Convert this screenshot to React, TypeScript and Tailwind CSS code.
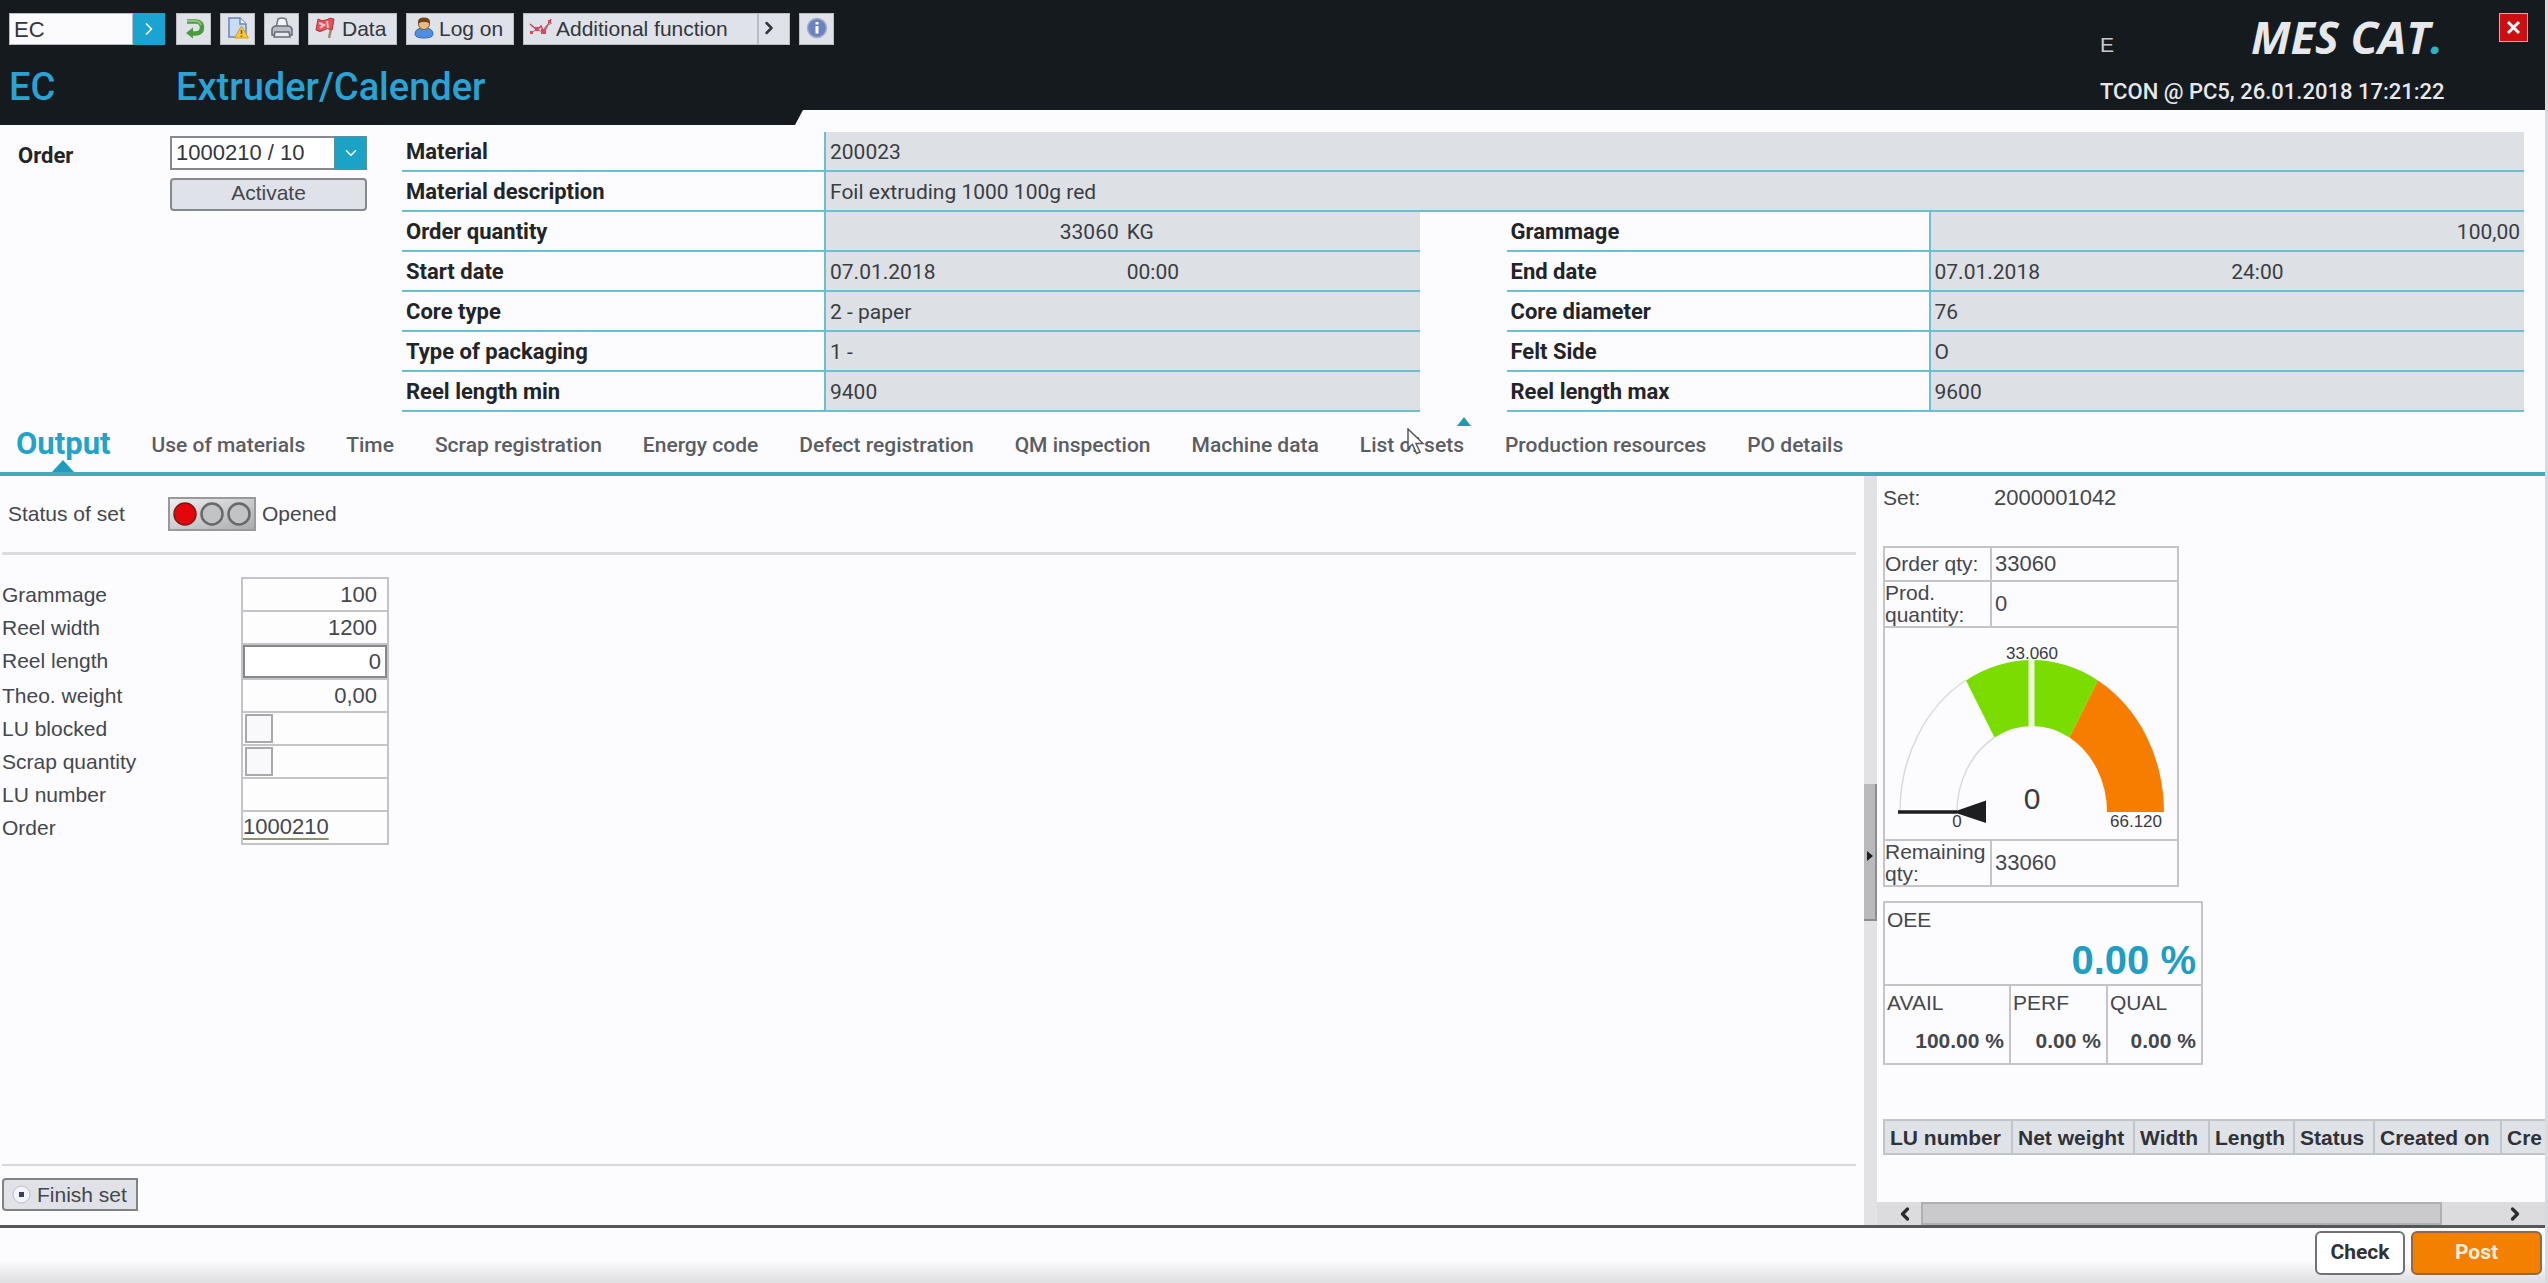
import { ReactNode } from "react";
import { ChevronDown, ChevronRight, ChevronLeft } from "lucide-react";

const TABS = [
  "Output",
  "Use of materials",
  "Time",
  "Scrap registration",
  "Energy code",
  "Defect registration",
  "QM inspection",
  "Machine data",
  "List of sets",
  "Production resources",
  "PO details",
];

const LU_COLUMNS = [
  { name: "LU number", width: "w-[128px]" },
  { name: "Net weight", width: "w-[122px]" },
  { name: "Width", width: "w-[75px]" },
  { name: "Length", width: "w-[85px]" },
  { name: "Status", width: "w-[80px]" },
  { name: "Created on", width: "w-[127px]" },
  { name: "Cre", width: "w-[127px]" },
];

/* ---------- icons ---------- */

function BackIcon() {
  return (
    <svg width="22" height="24" viewBox="0 0 22 24" aria-hidden="true">
      <path d="M4 5.500H13Q19 6 19 11.500Q19 17 13 17.500H9" fill="none" stroke="#4a9a40" strokeWidth="4.500" />
      <path d="M4 5H13Q17 5.500 18 9" fill="none" stroke="#86c878" strokeWidth="2" />
      <path d="M3 17L10 11.500V22.500Z" fill="#4a9a40" />
    </svg>
  );
}

function DocumentIcon() {
  return (
    <svg width="22" height="24" viewBox="0 0 22 24" aria-hidden="true">
      <path d="M2 2H13L19 8V21H2Z" fill="#c9dcf6" stroke="#6d82b4" strokeWidth="1.500" />
      <path d="M13 2V8H19" fill="#eef4fd" stroke="#6d82b4" strokeWidth="1.500" />
      <path d="M14.500 10L21.500 22H7.500Z" fill="#f5c842" stroke="#d19a1c" />
      <path d="M14.500 14V18M14.500 19.500V21" stroke="#7c5a10" strokeWidth="1.500" />
    </svg>
  );
}

function PrinterIcon() {
  return (
    <svg width="24" height="24" viewBox="0 0 24 24" aria-hidden="true">
      <path d="M6 12L8 3Q12 1 16 3L18 12" fill="#f4f5f8" stroke="#71747c" strokeWidth="1.500" />
      <path d="M2 13Q3 10 6 10H18Q21 10 22 13V19H2Z" fill="#b9bcc5" stroke="#666a73" strokeWidth="1.500" />
      <path d="M5 16H19L20 21H4Z" fill="#e8e9ee" stroke="#666a73" strokeWidth="1.500" />
    </svg>
  );
}

function FlagIcon() {
  return (
    <svg width="22" height="24" viewBox="0 0 22 24" aria-hidden="true">
      <path d="M19 4L15 22" stroke="#a08a72" strokeWidth="2.500" />
      <path d="M20 3Q16 1 12 4Q8 6 4 3L2 14Q6 17 10 14Q13 11 18 14Z" fill="#e2535a" stroke="#b73239" />
      <path d="M5 7L10 9L6 12M13 5L14 12" stroke="#f7c5c8" strokeWidth="2" fill="none" />
    </svg>
  );
}

function UserIcon() {
  return (
    <svg width="22" height="24" viewBox="0 0 22 24" aria-hidden="true">
      <path d="M2 18Q2 12 11 12Q20 12 20 18Q20 22 11 22Q2 22 2 18Z" fill="#4f8fe0" stroke="#3567ad" />
      <circle cx="11" cy="8" r="5.500" fill="#e8bb86" stroke="#8a5a24" />
      <path d="M5 8Q4 1 11 1.500Q18 1 17 8Q15 5.500 11 6Q7 5.500 5 8Z" fill="#70451a" />
    </svg>
  );
}

function FunctionIcon() {
  return (
    <svg width="24" height="22" viewBox="0 0 24 22" aria-hidden="true">
      <path d="M1 7L8 13L12 9L15 15L22 2" fill="none" stroke="#c9415c" strokeWidth="1.500" />
      <path d="M2 16L8 12L13 15L17 9L23 6" fill="none" stroke="#86808a" strokeWidth="1" />
      <path d="M1 14H4V17H1ZM6 10H10V14H6ZM12 12H17V17H12ZM19 3H22V6H19Z" fill="#d94763" />
    </svg>
  );
}

function InfoIcon() {
  return (
    <svg width="22" height="22" viewBox="0 0 22 22" aria-hidden="true">
      <circle cx="11" cy="11" r="9.500" fill="#6a82bd" stroke="#a3aecb" strokeWidth="1.500" />
      <rect x="9.500" y="9" width="3" height="7.500" fill="#fff" />
      <rect x="9.500" y="5" width="3" height="2.500" fill="#fff" />
    </svg>
  );
}

/* ---------- small parts ---------- */

function ToolButton({ label, className, children }: { label?: string; className: string; children: ReactNode }) {
  return (
    <button
      aria-label={label}
      className={`flex h-8 items-center border border-[#b9bcc2] bg-[#dfe2e8] pb-[2px] text-[21px] leading-none text-[#33363b] ${className}`}
    >
      {children}
    </button>
  );
}

function InfoLabel({ children }: { children: ReactNode }) {
  return (
    <dt className="flex h-10 items-center border-b-2 border-[#6cbfd3] pt-[2px] pl-1 font-[Roboto] text-[22px] leading-7 font-bold text-[#222428]">
      {children}
    </dt>
  );
}

function InfoValue({ className = "", children }: { className?: string; children: ReactNode }) {
  return (
    <dd
      className={`flex h-10 items-center border-b-2 border-l-2 border-[#6cbfd3] bg-[#dde1e5] px-1 pt-[2px] font-[Roboto] text-[21px] leading-7 text-[#3a3d42] ${className}`}
    >
      {children}
    </dd>
  );
}

function Header() {
  return (
    <header className="flex h-[125px] justify-between bg-[#151a1f] [clip-path:polygon(0_0,100%_0,100%_110px,803px_110px,795px_125px,0_125px)]">
      <div className="pt-[13px]">
        <div className="flex gap-[9px] pl-[9px]">
          <form className="mr-[2px] flex h-8" onSubmit={(e) => e.preventDefault()}>
            <input
              aria-label="Transaction"
              defaultValue="EC"
              className="w-[124px] border border-[#b9bcc2] bg-[#fbfbfd] px-1 text-[22px] text-[#33363b]"
            />
            <button aria-label="Go" className="flex w-8 items-center justify-center bg-[#1ba3d2] text-white">
              <ChevronRight size={20} />
            </button>
          </form>
          <ToolButton label="Back" className="w-[35px] justify-center"><BackIcon /></ToolButton>
          <ToolButton label="Messages" className="w-[35px] justify-center"><DocumentIcon /></ToolButton>
          <ToolButton label="Print" className="w-[35px] justify-center"><PrinterIcon /></ToolButton>
          <ToolButton className="w-[89px] gap-[6px] pl-[5px]"><FlagIcon />Data</ToolButton>
          <ToolButton className="w-[108px] gap-1 pl-[6px]"><UserIcon />Log on</ToolButton>
          <div className="flex">
            <ToolButton className="w-[235px] gap-[3px] pl-[5px]"><FunctionIcon />Additional function</ToolButton>
            <ToolButton label="More functions" className="w-8"><ChevronRight size={20} strokeWidth={3} /></ToolButton>
          </div>
          <ToolButton label="Info" className="w-[35px] justify-center"><InfoIcon /></ToolButton>
        </div>
        <div className="mt-5 flex pl-[9px] font-[Roboto] text-[38px] leading-[44px] font-medium text-[#2aa3d4]">
          <span className="w-[167px]">EC</span>
          <h1>Extruder/Calender</h1>
        </div>
      </div>

      <div className="flex gap-[56px] pr-[17px] pt-[13px] text-[#e6e8ec]">
        <div className="w-[343px]">
          <div className="flex h-[65px] justify-between">
            <span className="pt-[18px] text-[21px] leading-7 text-[#c8cbd0]">E</span>
            <span className="font-['Open_Sans'] text-[45px] leading-[48px] font-bold whitespace-nowrap italic">
              MES CAT<span className="text-[#2bb3c8]">.</span>
            </span>
          </div>
          <p className="font-[Roboto] text-[22px] leading-7 font-medium whitespace-nowrap">TCON @ PC5, 26.01.2018 17:21:22</p>
        </div>
        <button
          aria-label="Close"
          className="flex h-[29px] w-[29px] items-center justify-center border border-[#f0a0a0] bg-[#cc0d12]"
        >
          <svg width="15" height="15" viewBox="0 0 15 15" aria-hidden="true">
            <path d="M2 2L13 13M13 2L2 13" stroke="#fff" strokeWidth="3" />
          </svg>
        </button>
      </div>
    </header>
  );
}

/* right-hand pair, starts after the gutter column */
function InfoPair({ label, children }: { label: string; children: ReactNode }) {
  return (
    <div className="col-span-2 col-start-4 grid grid-cols-[422px_1fr]">
      <InfoLabel>{label}</InfoLabel>
      <InfoValue>{children}</InfoValue>
    </div>
  );
}

function OrderInfo() {
  return (
    <section className="flex pr-[21px] pt-[7px]">
      <div className="flex w-[402px] pl-[18px]">
        <label htmlFor="order" className="w-[152px] pt-[10px] font-[Roboto] text-[22px] leading-7 font-bold text-[#222428]">
          Order
        </label>
        <div className="w-[197px] pt-1">
          <div className="relative h-[34px]">
            <select
              id="order"
              className="h-full w-full appearance-none border-2 border-[#85888d] bg-white px-1 text-[22px] leading-none text-[#33363b]"
            >
              <option>1000210 / 10</option>
            </select>
            <span className="pointer-events-none absolute top-0 right-0 flex h-full w-[33px] items-center justify-center border border-[#5c8ea0] bg-[#1ba3c6] text-white">
              <ChevronDown size={18} />
            </span>
          </div>
          <button className="mt-2 h-[33px] w-full rounded-sm border-2 border-[#85888d] bg-[#dfe2e8] pb-1 text-[21px] leading-none text-[#44474c]">
            Activate
          </button>
        </div>
      </div>

      <dl className="grid flex-1 grid-cols-[422px_1fr_87px_422px_1fr]">
        <InfoLabel>Material</InfoLabel>
        <InfoValue className="col-span-4">200023</InfoValue>
        <InfoLabel>Material description</InfoLabel>
        <InfoValue className="col-span-4">Foil extruding 1000 100g red</InfoValue>
        <InfoLabel>Order quantity</InfoLabel>
        <InfoValue>
          <span className="flex-1 text-right">33060</span>
          <span className="flex-1 pl-2">KG</span>
        </InfoValue>
        <InfoPair label="Grammage">
          <span className="flex-1 text-right">100,00</span>
        </InfoPair>
        <InfoLabel>Start date</InfoLabel>
        <InfoValue>
          <span className="flex-1">07.01.2018</span>
          <span className="flex-1 pl-2">00:00</span>
        </InfoValue>
        <InfoPair label="End date">
          <span className="flex-1">07.01.2018</span>
          <span className="flex-1 pl-2">24:00</span>
        </InfoPair>
        <InfoLabel>Core type</InfoLabel>
        <InfoValue>2 - paper</InfoValue>
        <InfoPair label="Core diameter">76</InfoPair>
        <InfoLabel>Type of packaging</InfoLabel>
        <InfoValue>1 -</InfoValue>
        <InfoPair label="Felt Side">O</InfoPair>
        <InfoLabel>Reel length min</InfoLabel>
        <InfoValue>9400</InfoValue>
        <InfoPair label="Reel length max">9600</InfoPair>
      </dl>
    </section>
  );
}

function Tabs() {
  return (
    <div className="relative border-b-4 border-[#46a9b9]">
      <nav role="tablist" className="flex h-[60px] gap-[41px] pl-4 font-[Roboto] text-[21px] font-medium text-[#5a5d62]">
        {TABS.map((tab, i) => (
          <button
            key={tab}
            role="tab"
            aria-selected={i === 0}
            className={
              i === 0
                ? "relative h-full pt-1 text-[31px] leading-9 font-bold text-[#23a3c8]"
                : "h-full pt-2 whitespace-nowrap"
            }
          >
            {tab}
            {i === 0 && (
              <svg className="absolute bottom-0 left-1/2 -translate-x-1/2" width="22" height="12" viewBox="0 0 22 12" aria-hidden="true">
                <path d="M11 0L22 12H0Z" fill="#1d9dbb" />
              </svg>
            )}
          </button>
        ))}
      </nav>
      {/* collapse marker and pointer float over the tab strip */}
      <svg className="absolute top-[5px] left-[1457px]" width="14" height="9" viewBox="0 0 14 9" aria-hidden="true">
        <path d="M7 0L14 9H0Z" fill="#1d9dab" />
      </svg>
      <svg className="absolute top-[16px] left-[1407px]" width="18" height="27" viewBox="0 0 18 27" aria-hidden="true">
        <path d="M1 1V20L5.500 16.500L9.500 25.500L13 24L9 15.500H16Z" fill="#fff" stroke="#55585d" strokeWidth="1.500" />
      </svg>
    </div>
  );
}

function StatusLight() {
  return (
    <svg width="88" height="34" viewBox="0 0 88 34" role="img" aria-label="Red">
      <defs>
        <linearGradient id="housing" x1="0" y1="0" x2="1" y2="1">
          <stop offset="0" stopColor="#f0f0f2" />
          <stop offset="1" stopColor="#a9aaac" />
        </linearGradient>
      </defs>
      <rect x="1" y="1" width="86" height="32" fill="url(#housing)" stroke="#98999b" strokeWidth="2" />
      <circle cx="17" cy="17" r="11" fill="#e3060b" stroke="#7d1a1c" strokeWidth="1.500" />
      <circle cx="44" cy="17" r="10.500" fill="#c2c3c4" stroke="#66686a" strokeWidth="2.500" />
      <circle cx="71" cy="17" r="10.500" fill="#c2c3c4" stroke="#66686a" strokeWidth="2.500" />
    </svg>
  );
}

function Field({ id, label, children }: { id: string; label: string; children: ReactNode }) {
  return (
    <div className="flex">
      <label htmlFor={id} className="w-[239px] leading-8">{label}</label>
      <div className="flex w-[148px] border-x-2 border-b-2 border-[#c2c4c7] bg-[#fdfdfe]">{children}</div>
    </div>
  );
}

const INPUT = "h-[31px] w-full bg-transparent pr-[10px] text-right text-[22px] leading-none";
const TICK = "my-px ml-[2px] h-[29px] w-7 appearance-none border-2 border-[#a7a9ac] bg-[#f9f9fb]";

function OutputPanel() {
  return (
    <section className="flex min-w-0 flex-1 flex-col pr-2 pl-[2px] text-[21px] text-[#44474c]">
      <div className="flex h-[79px] items-center border-b-[3px] border-[#dcdcdf] pl-[6px]">
        <span className="w-[160px]">Status of set</span>
        <StatusLight />
        <span className="pl-[6px]">Opened</span>
      </div>

      <form className="pt-[22px]">
        <div className="ml-[239px] w-[148px] border-b-2 border-[#c2c4c7]" />
        <Field id="grammage" label="Grammage">
          <input id="grammage" defaultValue="100" className={INPUT} />
        </Field>
        <Field id="width" label="Reel width">
          <input id="width" defaultValue="1200" className={INPUT} />
        </Field>
        <Field id="length" label="Reel length">
          <input id="length" defaultValue="0" className="h-[33px] w-full border-2 border-[#86888b] bg-white pr-1 text-right text-[22px] leading-none" />
        </Field>
        <Field id="weight" label="Theo. weight">
          <input id="weight" defaultValue="0,00" className={INPUT} />
        </Field>
        <Field id="blocked" label="LU blocked">
          <input id="blocked" type="checkbox" className={TICK} />
        </Field>
        <Field id="scrap" label="Scrap quantity">
          <input id="scrap" type="checkbox" className={TICK} />
        </Field>
        <Field id="lu" label="LU number">
          <input id="lu" className={INPUT} />
        </Field>
        <Field id="order-link" label="Order">
          <a id="order-link" href="#order" className="h-[31px] text-[22px] leading-[30px] underline decoration-[#8f9468] decoration-2 underline-offset-4">
            1000210
          </a>
        </Field>
      </form>

      <div className="mt-auto h-[61px] border-t-2 border-[#d6d7da] pt-3">
        <button className="flex h-[33px] w-[136px] items-center gap-[6px] rounded-l-sm border-2 border-[#7f8286] bg-[#e0e2e8] pl-2 leading-none">
          <svg width="19" height="19" viewBox="0 0 19 19" aria-hidden="true">
            <circle cx="9.500" cy="9.500" r="8.500" fill="#f3f4fa" stroke="#b7bdd0" />
            <rect x="7" y="7" width="5" height="5" fill="#39415c" />
          </svg>
          <span className="whitespace-nowrap">Finish set</span>
        </button>
      </div>
    </section>
  );
}

function Gauge() {
  return (
    <svg className="block" width="292" height="211" viewBox="0 0 292 211" role="img" aria-label="Produced quantity">
      <path d="M15 184A132 152 0 0 1 81 52" fill="none" stroke="#d9dadc" strokeWidth="1.500" />
      <path d="M72 184A75 86 0 0 1 109.500 109.500" fill="none" stroke="#d9dadc" strokeWidth="1.500" />
      <path d="M81 52.400A132 152 0 0 1 213 52.400L184.500 109.500A75 86 0 0 0 109.500 109.500Z" fill="#7adc00" />
      <path d="M213 52.400A132 152 0 0 1 279 184H222A75 86 0 0 0 184.500 109.500Z" fill="#f67d00" />
      <rect x="143.500" y="31" width="6" height="68" fill="#eefbdc" />
      <path d="M13 184H72" stroke="#1d1e20" strokeWidth="3.500" />
      <path d="M68 184L101 172.500V195Z" fill="#1d1e20" />
      <g fill="#3a3b3e" fontSize="17" textAnchor="middle">
        <text x="147" y="31">33.060</text>
        <text x="72" y="199">0</text>
        <text x="251" y="199">66.120</text>
        <text x="147" y="181" fontSize="30">0</text>
      </g>
    </svg>
  );
}

function Rate({ label, value }: { label: string; value: string }) {
  return (
    <div className="h-[77px] border-l-2 border-[#c4c5c8] px-[2px] pt-[3px] first:border-l-0">
      <p className="leading-7">{label}</p>
      <p className="pt-[10px] pr-[3px] text-right leading-7 font-bold">{value}</p>
    </div>
  );
}

function SetPanel() {
  return (
    <aside className="flex w-[668px] flex-col text-[21px] text-[#44474c]">
      <div className="min-h-0 flex-1 overflow-hidden pl-[6px]">
        <div className="flex h-[70px] pt-2 leading-7">
          <span className="w-[111px]">Set:</span>
          <span className="text-[22px]">2000001042</span>
        </div>

        <table className="w-[296px] border-collapse text-left leading-[22px]">
          <tbody>
            <tr className="h-[34px]">
              <th scope="row" className="w-[107px] border-2 border-[#c4c5c8] font-normal whitespace-nowrap">Order qty:</th>
              <td className="border-2 border-[#c4c5c8] pl-[3px] text-[22px]">33060</td>
            </tr>
            <tr className="h-[46px]">
              <th scope="row" className="border-2 border-[#c4c5c8] font-normal">Prod. quantity:</th>
              <td className="border-2 border-[#c4c5c8] pl-[3px] text-[22px]">0</td>
            </tr>
            <tr>
              <td colSpan={2} className="border-2 border-[#c4c5c8]"><Gauge /></td>
            </tr>
            <tr className="h-[46px]">
              <th scope="row" className="border-2 border-[#c4c5c8] font-normal">Remaining qty:</th>
              <td className="border-2 border-[#c4c5c8] pl-[3px] text-[22px]">33060</td>
            </tr>
          </tbody>
        </table>

        <div className="mt-[14px] w-[320px] border-2 border-[#c4c5c8]">
          <div className="h-[81px] px-[2px] pt-[3px]">
            <p className="leading-7">OEE</p>
            <p className="pt-1 pr-[3px] text-right text-[40px] leading-[44px] font-bold text-[#1f9dc3]">0.00 %</p>
          </div>
          <div className="grid grid-cols-[124px_97px_1fr] border-t-2 border-[#c4c5c8]">
            <Rate label="AVAIL" value="100.00 %" />
            <Rate label="PERF" value="0.00 %" />
            <Rate label="QUAL" value="0.00 %" />
          </div>
        </div>

        <table className="mt-[54px] w-[744px] table-fixed border-collapse text-[#2f3237]">
          <thead>
            <tr className="h-[34px] bg-[#dfe3e8]">
              {LU_COLUMNS.map((col) => (
                <th key={col.name} className={`${col.width} border-2 border-[#c1c4c9] pl-[5px] text-left leading-none whitespace-nowrap`}>
                  {col.name}
                </th>
              ))}
            </tr>
          </thead>
        </table>
      </div>

      <div className="flex h-[23px] items-center bg-[#dcdcde] pr-5 pl-[18px] text-[#2b2c2e]">
        <button aria-label="Scroll left" className="w-[26px]"><ChevronLeft size={20} strokeWidth={4} /></button>
        <div className="h-full flex-1">
          <div className="h-full w-[521px] border-2 border-[#b0b0b3] bg-[#cacacc]" />
        </div>
        <button aria-label="Scroll right"><ChevronRight size={20} strokeWidth={4} /></button>
      </div>
    </aside>
  );
}

export default function App() {
  return (
    <div className="flex min-h-screen flex-col border-r-[3px] border-[#d9dade] bg-[#fcfcfe] font-['Liberation_Sans',Arial,sans-serif]">
      <Header />
      <OrderInfo />
      <Tabs />

      <main className="flex flex-1">
        <OutputPanel />
        <div className="flex w-[13px] flex-col bg-[#e1e2e5]">
          <button
            aria-label="Toggle set panel"
            className="mt-[308px] flex h-[137px] items-center justify-center border-r-2 border-b-2 border-[#8b8c8f] bg-[#b9babd] pt-2"
          >
            <svg width="6" height="10" viewBox="0 0 6 10" aria-hidden="true">
              <path d="M0 0L6 5L0 10Z" fill="#1d1e20" />
            </svg>
          </button>
        </div>
        <SetPanel />
      </main>

      <footer className="flex h-[58px] items-start justify-end gap-[6px] border-t-[3px] border-[#55575b] bg-linear-to-b from-[#fcfcfe] from-60% to-[#dedee0] pt-[3px] pr-[3px] font-[Roboto] text-[21px] font-bold">
        <button className="h-[44px] w-[90px] rounded-md border-2 border-[#6f7175] bg-white text-[#303236]">Check</button>
        <button className="h-[44px] w-[131px] rounded-md border-2 border-[#8f6a45] bg-[#f38000] text-[#fdeedb]">Post</button>
      </footer>
    </div>
  );
}
